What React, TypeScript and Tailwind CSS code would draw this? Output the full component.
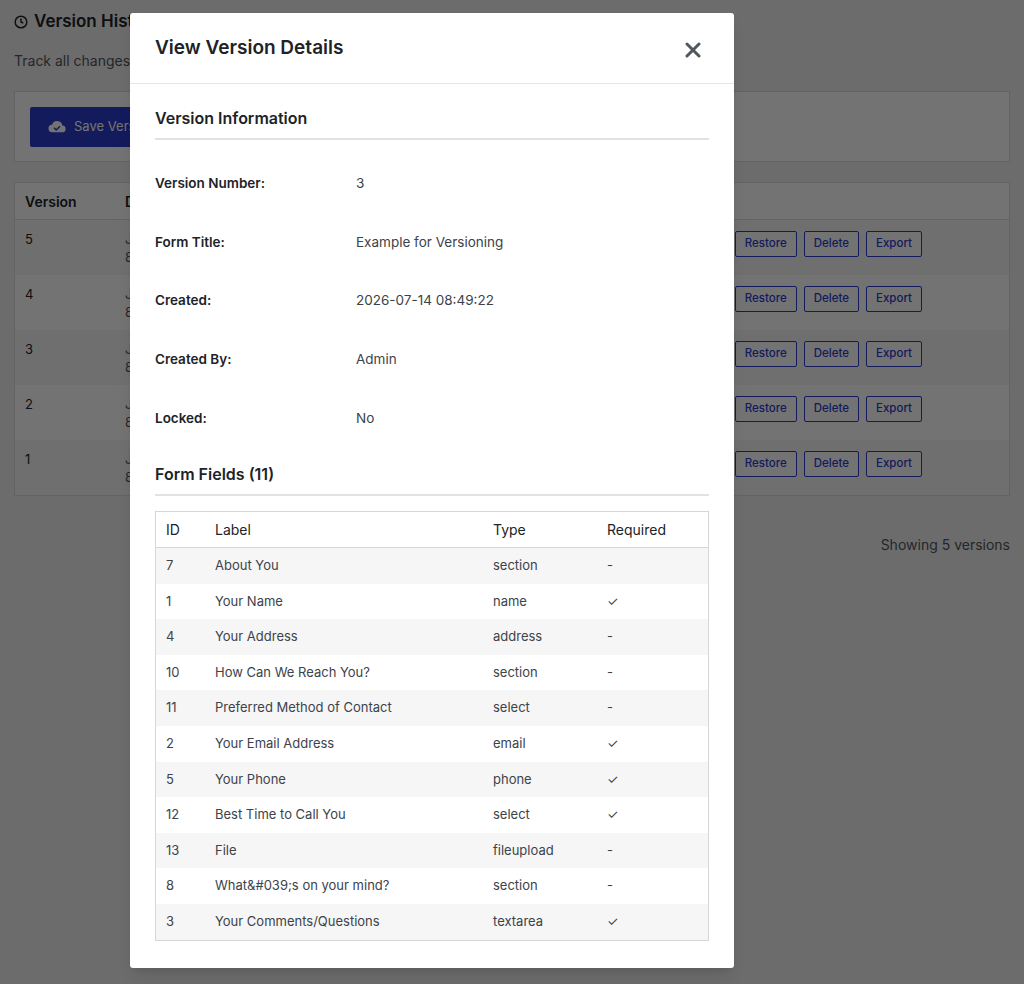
import React from "react";

const fields: [string, string, string, boolean][] = [
  ["7", "About You", "section", false],
  ["1", "Your Name", "name", true],
  ["4", "Your Address", "address", false],
  ["10", "How Can We Reach You?", "section", false],
  ["11", "Preferred Method of Contact", "select", false],
  ["2", "Your Email Address", "email", true],
  ["5", "Your Phone", "phone", true],
  ["12", "Best Time to Call You", "select", true],
  ["13", "File", "fileupload", false],
  ["8", "What&#039;s on your mind?", "section", false],
  ["3", "Your Comments/Questions", "textarea", true],
];

const info: [string, string][] = [
  ["Version Number:", "3"],
  ["Form Title:", "Example for Versioning"],
  ["Created:", "2026-07-14 08:49:22"],
  ["Created By:", "Admin"],
  ["Locked:", "No"],
];

export default function App() {
  const font = { fontFamily: "Inter, 'Noto Sans', Arial, sans-serif" };
  return (
    <div className="relative w-[1024px] h-[984px] overflow-hidden bg-[#f0f0f1] text-[#1d2327]" style={font}>
      <div className="px-[14px] pt-[10px]">
        <div className="flex items-center gap-[6px] h-[24px] text-[17px] font-semibold">
          <svg width="14" height="14" viewBox="0 0 24 24" fill="none" stroke="currentColor" strokeWidth="2.5"><circle cx="12" cy="12" r="10"/><path d="M12 6v6l4 2"/></svg>
          Version History
        </div>
        <div className="mt-[16px] text-[14px] text-[#50575e]">Track all changes made to your form over time.</div>
        <div className="mt-[20px] border border-[#dcdcde] bg-white h-[71px] flex items-center px-[15px]">
          <button className="h-[40px] px-[18px] bg-[#2c3ccc] text-white text-[13px] rounded-[2px] flex items-center gap-2">
            <svg width="18" height="14" viewBox="0 0 24 18" fill="white"><path d="M19 7a7 7 0 0 0-13.6-1A5 5 0 0 0 6 16h13a4.5 4.5 0 0 0 0-9z"/><path d="M8 10l3 3 5-5" stroke="#2c3ccc" strokeWidth="2" fill="none"/></svg>
            Save Version
          </button>
        </div>
        <div className="mt-[20px] border border-[#dcdcde] bg-white">
          <div className="h-[37px] flex items-center border-b border-[#dcdcde] text-[14px] font-semibold px-[10px]">
            <div className="w-[100px]">Version</div><div>Date</div>
          </div>
          {["5", "4", "3", "2", "1"].map((v, i) => (
            <div key={v} className={`h-[55px] flex items-start pt-[10px] px-[10px] text-[13px] ${i % 2 === 0 ? "bg-[#f6f7f7]" : "bg-white"}`}>
              <div className="w-[100px]">{v}</div>
              <div className="text-[#50575e] leading-[18px]">Jul 14, 2026<br/>8:49 am</div>
              <div className="ml-auto mr-[77px] flex gap-[7px] mt-[1px]">
                {["View", "Restore", "Delete", "Export"].map((b) => (
                  <span key={b} className="h-[26px] px-[9px] flex items-center border border-[#2c3ccc] text-[#2c3ccc] text-[11.5px] font-medium rounded-[2px] bg-white">{b}</span>
                ))}
              </div>
            </div>
          ))}
        </div>
        <div className="mt-[38px] text-right text-[14px] text-[#50575e]">Showing 5 versions</div>
      </div>
      <div className="absolute inset-0 bg-black/[0.55]" />
      <div className="absolute left-[130px] top-[13px] w-[604px] h-[955px] bg-white rounded-[3px] shadow-lg">
        <div className="h-[71px] border-b border-[#e5e5e5] flex items-center justify-between px-[25px]">
          <div className="text-[19px] font-semibold">View Version Details</div>
          <svg width="16" height="16" viewBox="0 0 16 16" stroke="#50575e" strokeWidth="3" strokeLinecap="round" className="mr-[8px] mt-[4px]"><path d="M2 2l12 12M14 2L2 14"/></svg>
        </div>
        <div className="px-[25px]">
          <div className="mt-[22px] text-[16px] font-semibold pb-[8px] border-b-2 border-[#e2e2e2]">Version Information</div>
          <div className="pt-[14px]">
            {info.map(([k, v]) => (
              <div key={k} className="h-[58.6px] flex items-center text-[13.5px]">
                <div className="w-[201px] font-semibold">{k}</div>
                <div className="text-[#3c434a]">{v}</div>
              </div>
            ))}
          </div>
          <div className="mt-[15px] text-[16px] font-semibold pb-[8px] border-b-2 border-[#e2e2e2]">Form Fields (11)</div>
          <div className="mt-[15px] border border-[#d6d6d6] text-[13px] text-[#3c434a]">
            <div className="h-[36px] flex items-center border-b border-[#d6d6d6] text-[14px] text-[#1d2327]">
              <div className="w-[59px] pl-[10px]">ID</div>
              <div className="w-[278px]">Label</div>
              <div className="w-[114px]">Type</div>
              <div>Required</div>
            </div>
            {fields.map(([id, label, type, req], i) => (
              <div key={id} className={`h-[35.6px] flex items-center ${i % 2 === 0 ? "bg-[#f6f6f6]" : "bg-white"}`}>
                <div className="w-[59px] pl-[10px]">{id}</div>
                <div className="w-[278px]">{label}</div>
                <div className="w-[114px]">{type}</div>
                <div>{req ? "✓" : "-"}</div>
              </div>
            ))}
          </div>
        </div>
      </div>
    </div>
  );
}
